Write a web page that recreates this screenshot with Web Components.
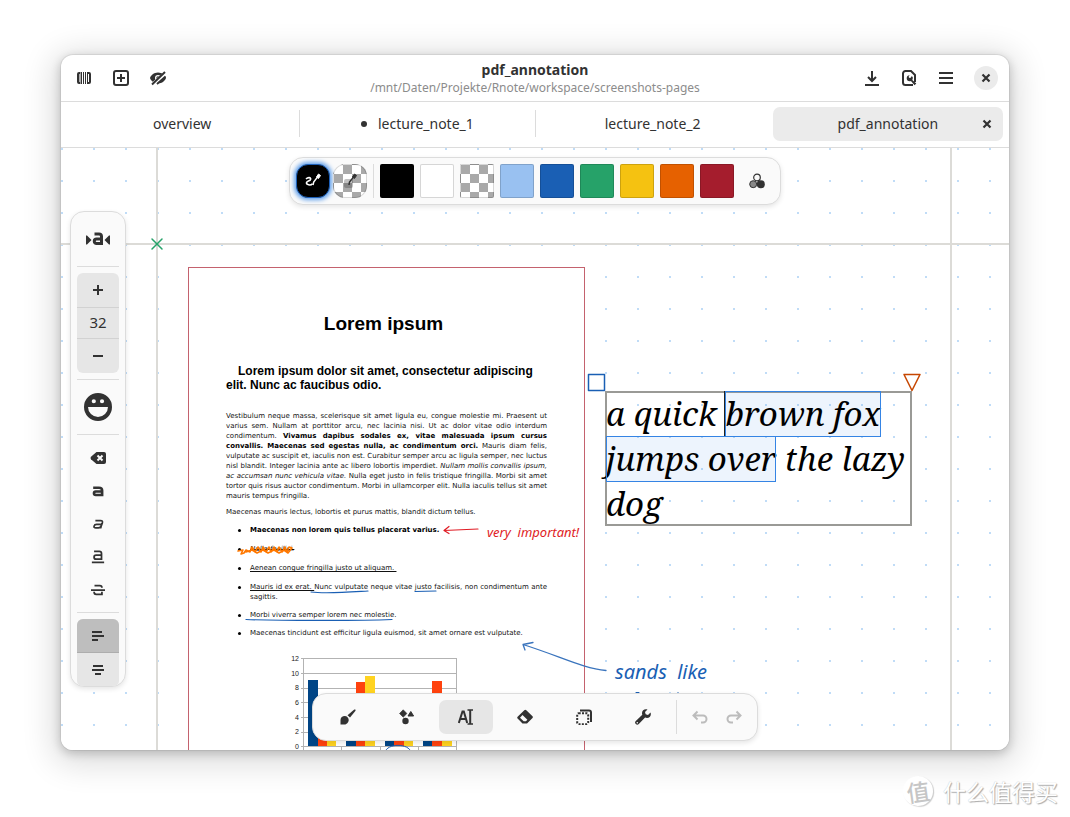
<!DOCTYPE html>
<html lang="en">
<head>
<meta charset="utf-8">
<title>pdf_annotation</title>
<style>
html, body { height: 100%; }
body { margin: 0; background: #fff; color: #323232; font-family: "Noto Sans", "Liberation Sans", sans-serif; font-size: 14px; }
</style>
</head>
<body>
<note-app></note-app>
<script>
const define = (name, html) => {
  const t = document.createElement('template');
  t.innerHTML = html;
  customElements.define(name, class extends HTMLElement {
    constructor() {
      super();
      this.attachShadow({ mode: 'open' }).append(t.content.cloneNode(true));
    }
  });
};

/* Symbolic icons on a 16px grid */
const ICONS = {
  sidebar: '<path d="M4.500 3H3a1 1 0 0 0-1 1v8a1 1 0 0 0 1 1h1.500" fill="none" stroke="currentColor" stroke-width="2"/><path d="M3 4h2v8H3z" opacity=".4"/><path d="M5 2h1v12H5zM7 2h1v12H7zM9 2h1v12H9zM11 2h1v12h-1z"/><path d="M12 3h1a1 1 0 0 1 1 1v8a1 1 0 0 1-1 1h-1" fill="none" stroke="currentColor" stroke-width="2"/>',
  newtab: '<rect x="1" y="1" width="14" height="14" rx="2" fill="none" stroke="currentColor" stroke-width="2"/><path d="M7 4h2v3h3v2H9v3H7V9H4V7h3z"/>',
  hidden: '<path fill-rule="evenodd" d="M8 2.500c4.200 0 7.200 3 8 5.500-.8 2.500-3.800 5.500-8 5.500S.8 10.500 0 8c.8-2.500 3.800-5.500 8-5.500zM8 5a3 3 0 1 0 0 6 3 3 0 0 0 0-6z"/><circle cx="8" cy="8" r="1.700"/><path d="M1.500 15.500L16 3" stroke="#fff" stroke-width="4"/><path d="M2 14.500L15 2" stroke="currentColor" stroke-width="2"/><path d="M7 14L15.500 6.500" stroke="currentColor" stroke-width="1.800"/>',
  save: '<path d="M7 1h2v7.600l2.300-2.300 1.400 1.400L8 12.400 3.300 7.700l1.400-1.400L7 8.600zM1 14h14v2H1z"/>',
  docsettings: '<path d="M12 15H4.500A2.500 2.500 0 0 1 2 12.500v-9A2.500 2.500 0 0 1 4.500 1H10l4 4v7" fill="none" stroke="currentColor" stroke-width="2"/><path d="M8.700 5.200a3 3 0 0 0 0 6c.4 0 .8 0 1.200-.3l3.700 4.300 1.700-1.600-4-3.700a3 3 0 0 0-.4-3.900L9.400 8 8 7.800 7.700 6.500z"/>',
  menu: '<path d="M1 2h14v2H1zM1 7h14v2H1zM1 12h14v2H1z"/>',
  close: '<path d="M4.500 4.500l7 7M11.500 4.500l-7 7" stroke="currentColor" stroke-width="2.200"/>',
  strokecolor: '<path d="M1 6c2-2 5-1.700 4.600.2C5 8.500 2 7.700 1.500 9.700c-.3 2 4 3.300 6 1" fill="none" stroke="currentColor" stroke-width="1.600"/><path d="M8 12l.7-3L13 3.400" stroke="currentColor" stroke-width="1.500" fill="none"/><path d="M11.500 4l2-3 2 1.500-2 3z" stroke="currentColor"/>',
  fillcolor: '<rect x="2" y="6" width="9" height="9" rx="2" opacity=".3"/><path d="M7 12l.5-3L12 3.400" stroke="currentColor" stroke-width="1.500" fill="none"/><path d="M10.500 4l2-3 2 1.500-2 3z" stroke="currentColor"/>',
  palette: '<circle cx="8" cy="4.500" r="3.300" fill="none" stroke="currentColor" stroke-width="1.200"/><circle cx="4.200" cy="11.200" r="3.500" fill="#888" stroke="currentColor"/><circle cx="11.800" cy="11.200" r="4"/>',
  brush: '<path d="M14.300.6c1.100-.5 1.700.3 1 1.300L10 8.500 7.500 6.200z"/><path d="M.5 15.500V11C.5 8.500 2.500 7 4.700 7 7 7 8.700 9 8.700 11s-1.700 4.500-4.200 4.500z"/>',
  shapes: '<path d="M4.200.8l3.700 3.700-3.700 3.700L.5 4.500z" stroke="currentColor" stroke-linejoin="round" stroke-width=".6"/><circle cx="6.500" cy="12" r="3.200"/><path d="M11.800 2.500L14.600 7H9z" stroke="currentColor" stroke-linejoin="round"/>',
  typewriter: '<path d="M.8 14L4.500 2.500h1.300L9.200 14M2 10h6" fill="none" stroke="currentColor" stroke-width="2"/><path d="M9.500 1H15M9.500 15H15" stroke="currentColor" stroke-width="1.600"/><path d="M12.200 1v14" stroke="currentColor" stroke-width="2"/>',
  eraser: '<path fill-rule="evenodd" d="M7.300 1.200q1-.8 2 0l6.200 6q.8.900 0 1.700L10 14.500H5.500L.6 9.500q-.8-.9 0-1.700zM3 8.700l3.700 3.600h2.200l1.500-1.600-4.900-4.700z"/>',
  selector: '<rect x="1.200" y="4.200" width="11" height="11" rx="1.500" fill="none" stroke="currentColor" stroke-width="2" stroke-dasharray="2 1.300"/><path d="M4 1.500h9a2 2 0 0 1 2 2V12h-1" fill="none" stroke="currentColor" stroke-width="2"/>',
  tools: '<path d="M15.500 3.500L13 6l-2.300-.7L10 3 12.500.5C9.800-.6 7 1.300 7 4c0 .7.100 1.300.3 1.800L.8 12a2 2 0 0 0 3 3l6.300-6.400c.6.300 1.200.4 1.900.4 2.700 0 4.700-2.800 3.500-5.500zM2.300 14.600a.8.800 0 1 1 0-1.600.8.800 0 0 1 0 1.600z"/>',
  undo: '<path d="M5.500 2.500L1.500 6.500l4 4M1.800 6.500H11a3.500 3.500 0 0 1 0 7H9" fill="none" stroke="currentColor" stroke-width="2"/>',
  redo: '<path d="M10.500 2.500l4 4-4 4M14.200 6.500H5a3.500 3.500 0 0 0 0 7h2" fill="none" stroke="currentColor" stroke-width="2"/>',
  plus: '<path d="M7 3h2v4h4v2H9v4H7V9H3V7h4z"/>',
  minus: '<path d="M3 7h10v2H3z"/>',
  emoji: '<path fill-rule="evenodd" d="M8 0a8 8 0 1 1 0 16A8 8 0 0 1 8 0zM5.600 3.500a1.200 1.200 0 1 0 0 2.400 1.200 1.200 0 0 0 0-2.400zM10.300 3.500a1.200 1.200 0 1 0 0 2.400 1.200 1.200 0 0 0 0-2.400zM2.300 8a5.700 5.700 0 0 0 11.400 0z"/>',
  backspace: '<path d="M6.500 2H14a2 2 0 0 1 2 2v8a2 2 0 0 1-2 2H6.500L1 9.200Q0 8 1 6.800z"/><path d="M7.500 5.500l5 5M12.500 5.500l-5 5" stroke="#fafafa" stroke-width="2"/>',
  bold: '<path d="M2.500 4.300H9q3.700 0 3.700 3V12.500H5.400a2 2 0 0 1 0-4h7.200" fill="none" stroke="currentColor" stroke-width="3"/>',
  italic: '<path d="M5 4h6q2.500 0 2 2.500L12 9.500q-1 3-3.500 3H5.500q-2.500 0-2-2t3-2h6M12.500 7L11 13" fill="none" stroke="currentColor" stroke-width="2"/>',
  underline: '<path d="M3.500 1.500h6q2.500 0 2.500 2.500v6.500H5.800a2.300 2.300 0 0 1 0-4.600H12" fill="none" stroke="currentColor" stroke-width="2"/><path d="M1 13h14v2H1z"/>',
  strike: '<path d="M4 3h6q2.500 0 2.500 2.500M12.500 10v3H6q-2.500 0-2.500-3" fill="none" stroke="currentColor" stroke-width="2"/><path d="M0 7h16v2H0z"/>',
  alignleft: '<path d="M2 3h10v2H2zM2 7h12v2H2zM2 11h6v2H2z"/>',
  aligncenter: '<path d="M3 3h10v2H3zM2 7h12v2H2zM5 11h6v2H5z"/>',
};
customElements.define('note-icon', class extends HTMLElement {
  constructor() { super(); this.attachShadow({ mode: 'open' }); }
  connectedCallback() {
    this.shadowRoot.innerHTML = `<style>:host{display:block;width:var(--icon,16px);height:var(--icon,16px);flex:none}svg{display:block;width:100%;height:100%}</style><svg viewBox="0 0 16 16" fill="currentColor" aria-hidden="true">${ICONS[this.getAttribute('name')]}</svg>`;
  }
});

const BUTTON = `button{appearance:none;border:0;margin:0;padding:0;background:none;color:inherit;font:inherit;display:grid;place-items:center}`;
const PANEL = `box-sizing:border-box;background:#fafafa;border:1px solid #dcdcdc;border-radius:14px;box-shadow:0 2px 5px rgba(0,0,0,.1);padding:6px`;

define('note-header', `<style>
:host{display:grid;grid-template-columns:1fr auto 1fr;align-items:center;height:46px;border-bottom:1px solid #dcdcdc;padding:0 6px}
${BUTTON}
button{width:34px;height:34px}
.side{display:flex;gap:3px}
.end{justify-content:flex-end}
.close{margin-left:3px}
.close note-icon{background:#ebebeb;border-radius:12px;padding:4px}
.title{text-align:center}
h1{margin:0;font-size:14px;line-height:18px;font-weight:700}
p{margin:0;font-size:12px;line-height:17px;color:#8c8c8c}
</style>
<div class="side">
<button aria-label="Toggle sidebar"><note-icon name="sidebar"></note-icon></button>
<button aria-label="New tab"><note-icon name="newtab"></note-icon></button>
<button aria-label="Focus mode"><note-icon name="hidden"></note-icon></button>
</div>
<div class="title"><h1>pdf_annotation</h1><p>/mnt/Daten/Projekte/Rnote/workspace/screenshots-pages</p></div>
<div class="side end">
<button aria-label="Save"><note-icon name="save"></note-icon></button>
<button aria-label="Document settings"><note-icon name="docsettings"></note-icon></button>
<button aria-label="Menu"><note-icon name="menu"></note-icon></button>
<button class="close" aria-label="Close window"><note-icon name="close"></note-icon></button>
</div>`);

define('note-tab', `<style>
:host{display:grid;grid-template-columns:32px 1fr 32px;align-items:center;height:34px;border-radius:7px;position:relative}
:host([active]){background:#ebebeb}
:host([divided])::after{content:"";position:absolute;right:-3px;top:3px;bottom:4px;width:1px;background:#dcdcdc}
${BUTTON}
.label{grid-column:2;text-align:center;height:34px;padding-bottom:2px}
.end{display:grid;place-items:center}
:host(:not([active])) .end{display:none}
</style><button class="label"><span><slot></slot></span></button><button class="end" aria-label="Close tab"><note-icon name="close"></note-icon></button>`);

define('note-tabs', `<style>
:host{display:grid;grid-template-columns:repeat(4,1fr);gap:5px;padding:5px 6px 6px;border-bottom:1px solid #dcdcdc}
.dot{display:inline-block;width:6px;height:6px;border-radius:3px;background:currentColor;margin-right:11px;vertical-align:2px}
</style>
<note-tab divided>overview</note-tab>
<note-tab divided><span class="dot"></span>lecture_note_1</note-tab>
<note-tab>lecture_note_2</note-tab>
<note-tab active>pdf_annotation</note-tab>`);

define('color-bar', `<style>
:host{display:flex;align-items:center;${PANEL}}
${BUTTON}
button{box-sizing:border-box;width:34px;height:34px;flex:none}
.pad{border-radius:12px;border:1px solid rgba(0,0,0,.15);background:var(--c)}
.pad[aria-pressed=true]{color:#fff;border:1px solid #1c5fb8;box-shadow:0 0 4px 2px #62a0ea;margin-right:3px}
i{width:1px;height:34px;background:#dcdcdc;margin:0 6px}
.swatches{display:flex;gap:6px;margin-right:6px}
.swatches button{border:1px solid rgba(0,0,0,.16);border-radius:2px;background:var(--c)}
.clear{background:repeating-conic-gradient(#fff 0 25%,#a9a9a9 0 50%) 0 0/18px 18px !important}
.pad.clear{background-position:9px 0 !important}
.picker note-icon{--icon:16px}
</style>
<button class="pad" aria-pressed="true" aria-label="Stroke color" style="--c:#000"><note-icon name="strokecolor"></note-icon></button>
<button class="pad clear" aria-label="Fill color"><note-icon name="fillcolor"></note-icon></button>
<i></i>
<div class="swatches">
<button style="--c:#000" aria-label="Black"></button>
<button style="--c:#fff" aria-label="White"></button>
<button class="clear" aria-label="Transparent"></button>
<button style="--c:#99c1f1" aria-label="Light blue"></button>
<button style="--c:#1a5fb4" aria-label="Blue"></button>
<button style="--c:#26a269" aria-label="Green"></button>
<button style="--c:#f5c211" aria-label="Yellow"></button>
<button style="--c:#e66100" aria-label="Orange"></button>
<button style="--c:#a51d2d" aria-label="Red"></button>
</div>
<button class="picker" aria-label="Pick a color"><note-icon name="palette"></note-icon></button>`);

define('tool-bar', `<style>
:host{display:flex;align-items:center;width:446px;${PANEL} 6px 6px 8px}
${BUTTON}
button{height:34px;width:34px;border-radius:7px}
.tools{flex:1;display:flex;gap:6px}
.tools button{flex:1}
[aria-pressed=true]{background:#e6e6e6}
i{width:1px;height:34px;background:#dcdcdc;margin:0 6px}
:disabled{color:#bcbcbc}
</style>
<div class="tools">
<button aria-label="Brush"><note-icon name="brush"></note-icon></button>
<button aria-label="Shaper"><note-icon name="shapes"></note-icon></button>
<button aria-label="Typewriter" aria-pressed="true"><note-icon name="typewriter"></note-icon></button>
<button aria-label="Eraser"><note-icon name="eraser"></note-icon></button>
<button aria-label="Selector"><note-icon name="selector"></note-icon></button>
<button aria-label="Tools"><note-icon name="tools"></note-icon></button>
</div><i></i>
<button disabled aria-label="Undo"><note-icon name="undo"></note-icon></button>
<button disabled aria-label="Redo"><note-icon name="redo"></note-icon></button>`);

define('side-bar', `<style>
:host{display:flex;flex-direction:column;width:56px;overflow:hidden;${PANEL}}
${BUTTON}
button{width:100%;height:33px;flex:none;--icon:14px}
.big{height:42px;--icon:28px}
.font{width:26px;height:16px}
hr{border:0;height:1px;background:#dcdcdc;margin:6px 0;width:100%;flex:none}
.spin{background:#e6e6e6;border-radius:6px;flex:none}
.spin button{height:34px;--icon:16px}
input{display:block;box-sizing:border-box;width:100%;height:32px;border:1px solid #d2d2d2;border-width:1px 0;background:none;font:inherit;font-size:15px;color:inherit;text-align:center;padding:0 0 2px;outline:0}
.align{background:#e6e6e6;border-radius:6px;overflow:hidden;flex:none}
.align button{height:34px;--icon:16px}
.align [aria-pressed=true]{background:#bebebe;border-bottom:1px solid #adadad}
</style>
<button class="big" aria-label="Font"><svg class="font" viewBox="0 0 26 16" fill="currentColor"><path d="M1 4.500v9h1L6.500 9 2 4.500zM25 4.500v9h-1L19.500 9 24 4.500z"/><path d="M9.500 3H14q2.500 0 2.500 2.500V12.500H11.500a2.200 2.200 0 0 1 0-4.500h5" fill="none" stroke="currentColor" stroke-width="3"/></svg></button>
<hr>
<div class="spin"><button aria-label="Increase size"><note-icon name="plus"></note-icon></button><input aria-label="Font size" value="32"><button aria-label="Decrease size"><note-icon name="minus"></note-icon></button></div>
<hr>
<button class="big" aria-label="Insert emoji"><note-icon name="emoji"></note-icon></button>
<hr>
<button style="--icon:16px" aria-label="Remove formatting"><note-icon name="backspace"></note-icon></button>
<button aria-label="Bold"><note-icon name="bold"></note-icon></button>
<button aria-label="Italic"><note-icon name="italic"></note-icon></button>
<button aria-label="Underline"><note-icon name="underline"></note-icon></button>
<button aria-label="Strikethrough"><note-icon name="strike"></note-icon></button>
<hr>
<div class="align"><button aria-pressed="true" aria-label="Align left"><note-icon name="alignleft"></note-icon></button><button aria-label="Align center"><note-icon name="aligncenter"></note-icon></button></div>`);

define('pdf-chart', `<style>:host{display:block}svg{display:block;margin-left:63px;overflow:visible}text{font:7px "Liberation Sans",sans-serif;fill:#222;text-anchor:end}</style>
<svg width="176" height="110" viewBox="0 0 176 110">
<path d="M12 5.500H167M12 20.500H167M12 35.500H167M12 49.500H167M12 64.500H167M12 79.500H167M12 93.500H167M14.500 5V97M167.500 5V97M52.500 94v3M91.500 94v3M129.500 94v3" stroke="#b3b3b3" fill="none"/>
<path fill="#004586" d="M19 27h10v66H19zM57 60h10v33H57zM96 50h9v43h-9zM134 50h9v43h-9z"/>
<path fill="#ff420e" d="M29 60h9v33h-9zM67 29h9v64h-9zM105 80h10v13h-10zM143 28h10v65h-10z"/>
<path fill="#ffd320" d="M38 60h9v33h-9zM76 23h10v70H76zM115 60h9v33h-9zM153 60h10v33h-10z"/>
<text x="10" y="8">12</text><text x="10" y="23">10</text><text x="10" y="37">8</text><text x="10" y="52">6</text><text x="10" y="67">4</text><text x="10" y="81">2</text><text x="10" y="96">0</text>
</svg>`);

define('pdf-page', `<style>
:host{display:block;box-sizing:border-box;background:#fff;border:1px solid #c4626e;padding:45px 37px 0;color:#111;font:7px/10px "DejaVu Sans",sans-serif;text-align:justify}
h1,h2{font-family:"Liberation Sans",sans-serif;margin:0;font-weight:700;color:#000}
h1{font-size:19px;line-height:22px;text-align:center;padding-right:6px}
h2{font-size:12px;line-height:14px;margin:29px 0 19px;text-indent:12px;text-align:left}
p{margin:0 0 6px}
ul{list-style:none;margin:8px 0 15px;padding:0 0 0 24px}
li{position:relative;margin-bottom:9px}
li:nth-last-child(-n+3){margin-bottom:8px}
li::before{content:"";position:absolute;left:-12px;top:4px;width:3px;height:3px;border-radius:2px;background:#000}
b{color:#000}
</style>
<h1>Lorem ipsum</h1>
<h2>Lorem ipsum dolor sit amet, consectetur adipiscing elit. Nunc ac faucibus odio.</h2>
<p>Vestibulum neque massa, scelerisque sit amet ligula eu, congue molestie mi. Praesent ut varius sem. Nullam at porttitor arcu, nec lacinia nisi. Ut ac dolor vitae odio interdum condimentum. <b>Vivamus dapibus sodales ex, vitae malesuada ipsum cursus convallis. Maecenas sed egestas nulla, ac condimentum orci.</b> Mauris diam felis, vulputate ac suscipit et, iaculis non est. Curabitur semper arcu ac ligula semper, nec luctus nisl blandit. Integer lacinia ante ac libero lobortis imperdiet. <em>Nullam mollis convallis ipsum, ac accumsan nunc vehicula vitae.</em> Nulla eget justo in felis tristique fringilla. Morbi sit amet tortor quis risus auctor condimentum. Morbi in ullamcorper elit. Nulla iaculis tellus sit amet mauris tempus fringilla.</p>
<p>Maecenas mauris lectus, lobortis et purus mattis, blandit dictum tellus.</p>
<ul>
<li><b>Maecenas non lorem quis tellus placerat varius.</b></li>
<li><em><s>Nulla facilisi.</s></em></li>
<li><u>Aenean congue fringilla justo ut aliquam.&nbsp;</u></li>
<li><u>Mauris id ex erat. </u>Nunc vulputate neque vitae justo facilisis, non condimentum ante sagittis.</li>
<li>Morbi viverra semper lorem nec molestie.</li>
<li>Maecenas tincidunt est efficitur ligula euismod, sit amet ornare est vulputate.</li>
</ul>
<pdf-chart></pdf-chart>`);

define('text-box', `<style>
:host{display:block;box-sizing:border-box;border:2px solid #9a9a96;color:#000;font:italic 33px/45px "Noto Serif","Droid Serif","Liberation Serif",serif;white-space:nowrap}
.lines{margin:-2px -1px}
.line{height:45px}
mark{display:inline-block;vertical-align:top;box-sizing:border-box;height:46px;color:inherit;background:rgba(53,132,228,.09);outline:1px solid #3584e4;outline-offset:-1px}
mark.caret{box-shadow:-1px 0 #222}
</style>
<div class="lines">
<div class="line">a quick <mark class="caret">brown fox</mark></div>
<div class="line"><mark>jumps over</mark> the lazy</div>
<div class="line">dog</div>
</div>`);

/* The endless drawing surface: every child sits at its document position */
define('note-canvas', `<style>
:host{display:block;position:relative;overflow:hidden;background:
linear-gradient(#dcdbd7,#dcdbd7) 95px 0/2px 100% no-repeat,
linear-gradient(#dcdbd7,#dcdbd7) 889px 0/2px 100% no-repeat,
linear-gradient(#dcdbd7,#dcdbd7) 0 95px/100% 2px no-repeat,
radial-gradient(circle at 1px 1px,#c0dcf7 0 1px,transparent 1px) 0 0/32px 32px #fff}
pdf-page{position:absolute;left:127px;top:119px;width:397px;height:900px}
text-box{position:absolute;left:544px;top:243px;width:307px;height:135px}
svg{position:absolute;left:0;top:0;width:948px;height:602px}
.hand{position:absolute;font-family:"Noto Sans","Liberation Sans",sans-serif;font-style:italic;white-space:pre}
.red{left:426px;top:374px;color:#e01b24;font-size:13px;line-height:20px}
.blue{left:554px;top:510px;color:#1a5fb4;font-size:20px;line-height:28px}
color-bar,tool-bar{position:absolute;left:50%;transform:translateX(-50%)}
color-bar{top:9px}
tool-bar{bottom:9px}
side-bar{position:absolute;left:9px;top:63px;bottom:63px}
</style>
<pdf-page></pdf-page>
<text-box></text-box>
<svg viewBox="61 148 948 602" fill="none" stroke-linecap="round" stroke-linejoin="round" aria-hidden="true">
<path d="M152 239l10 10M162 239l-10 10" stroke="#26a269" stroke-width="1.500"/>
<path d="M588.500 374.500h16v16h-16z" stroke="#1a5fb4" stroke-width="1.500"/>
<path d="M904 374.500h16l-8 16z" stroke="#c64600" stroke-width="1.500"/>
<path d="M478 529L444 530.500M449 526.500l-5 4 5 3" stroke="#e01b24" stroke-width="1.200"/>
<path d="M238 551l5-1-2 4 3-1 2-3 4 2 2-5 3 5 3-5 3 5 2-5 3 5 3-5 2 5 3-5 3 5 2-5 3 5 3-5 2 5 2-5 3 1-4 5-4-3-5 3-5-3-6 3-5-3-6 3-5-3-6 2" stroke="#ff7800" stroke-width="1.600"/>
<path d="M311 592c15 2 40 0 57-1M415 591.500l21-.5M246 619.500c30 1 110 1.500 146 0" stroke="#1a5fb4" stroke-width="1.200"/>
<path d="M606 670.500c-23-2-45-14-83-26M533 642.500l-10 2 2 5.500" stroke="#3a74bd" stroke-width="1.300"/>
<path d="M385 752c2-9 24-9 26 0M636 692.500h3M678 692.500v1" stroke="#1a5fb4"/>
</svg>
<span class="hand red">very  important!</span>
<span class="hand blue">sands  like</span>
<color-bar></color-bar>
<side-bar></side-bar>
<tool-bar></tool-bar>`);

define('water-mark', `<style>
:host{display:flex;align-items:center;gap:10px;font:23px/30px "Noto Sans CJK SC",sans-serif;color:#fff;text-shadow:1px 1px 1px #aaa,0 0 1px #bbb}
.seal{display:grid;place-items:center;width:30px;height:30px;border-radius:15px;background:#fff;box-shadow:1px 1px 1px #ccc;color:#c6c6c6;text-shadow:none;font-weight:500;transform:rotate(-8deg)}
</style><span class="seal">值</span><span>什么值得买</span>`);

define('note-app', `<style>
:host{display:flex;box-sizing:border-box;min-height:100vh;padding:55px 61px 67px;position:relative}
main{flex:1;min-width:0;display:flex;flex-direction:column;background:#fff;border-radius:12px;overflow:hidden;box-shadow:0 0 0 1px rgba(0,0,0,.06),0 3px 10px 1px rgba(0,0,0,.18),0 6px 32px 8px rgba(0,0,0,.14)}
note-canvas{flex:1}
water-mark{position:absolute;right:12px;bottom:11px}
</style>
<main><note-header></note-header><note-tabs></note-tabs><note-canvas></note-canvas></main>
<water-mark></water-mark>`);
</script>
</body>
</html>
